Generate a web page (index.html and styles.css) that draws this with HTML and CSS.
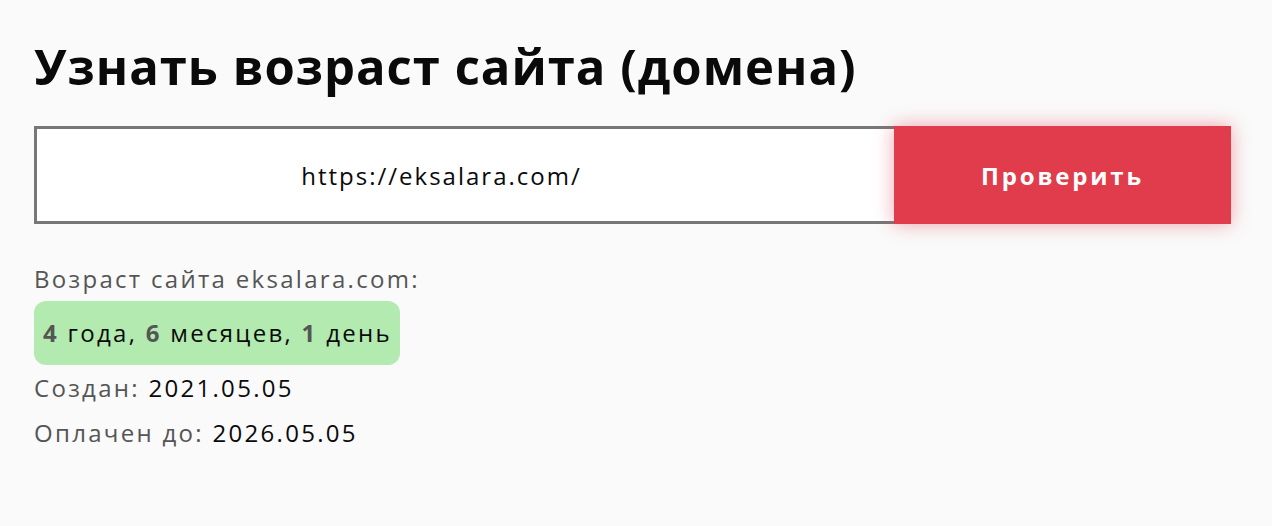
FILE: index.html
```html
<!DOCTYPE html>
<html lang="ru">
<head>
  <meta charset="UTF-8">
  <meta content="width=device-width, initial-scale=1.0" name="viewport">
  <title>Узнать возраст сайта</title>
  <link rel="stylesheet" href="styles.css">
</head>
<body>
<div class="age-container">

  <h1 class="age-title">Узнать возраст сайта (домена)</h1>

  <!-- form -->
  <form class="age-form">
    <input class="age-input" type="text" name="domain" value="https://eksalara.com/">
    <button class="age-button" type="button">Проверить</button>
  </form>

  <!-- result -->
  <div class="age-result">
    <div class="result-line">Возраст сайта eksalara.com:</div>
    <div class="result-badge"><b>4</b> года, <b>6</b> месяцев, <b>1</b> день</div>
    <div class="result-line">Создан: <span class="result-value">2021.05.05</span></div>
    <div class="result-line">Оплачен до: <span class="result-value">2026.05.05</span></div>
  </div>
</div>
</body>
</html>
```

FILE: styles.css
```css
:root{
  --page-background: #fafafa;
  --text-main: #0a0a0a;
  --text-muted: #555555;
  --input-border: #777777;
  --button-red: #e03c4b;
  --badge-green: #b2eab0;
}

body{
  margin: 0;
  background-color: var(--page-background);
  font-family: 'Open Sans', sans-serif;
  color: var(--text-main);
}

.age-container{
  padding: 34px 41px 0 34px;
}

.age-title{
  margin: 0 0 28px 0;
  font-size: 49px;
  line-height: 64px;
  font-weight: 700;
  letter-spacing: 1px;
}

.age-form{
  display: flex;
  height: 98px;
}

.age-input{
  flex: 1;
  box-sizing: border-box;
  height: 98px;
  padding: 0 48px 0 0;
  border: 3px solid var(--input-border);
  border-right: none;
  background-color: #ffffff;
  font-family: 'Open Sans', sans-serif;
  font-size: 24px;
  letter-spacing: 2px;
  color: var(--text-main);
  text-align: center;
  outline: none;
}

.age-button{
  width: 337px;
  height: 98px;
  border: none;
  background-color: var(--button-red);
  box-shadow: 0 0 18px rgba(224, 60, 75, 0.45);
  color: #ffffff;
  font-family: 'Open Sans', sans-serif;
  font-size: 24px;
  font-weight: 700;
  letter-spacing: 2.8px;
}

.age-result{
  padding-top: 32px;
  font-size: 24px;
  letter-spacing: 2.3px;
}

.result-line{
  line-height: 45px;
  color: var(--text-muted);
}

.result-value{
  color: var(--text-main);
}

.result-badge{
  display: inline-block;
  height: 64px;
  line-height: 64px;
  padding: 0 8px 0 9px;
  border-radius: 12px;
  background-color: var(--badge-green);
  font-weight: 500;
}

.result-badge b{
  color: var(--text-muted);
}
```
